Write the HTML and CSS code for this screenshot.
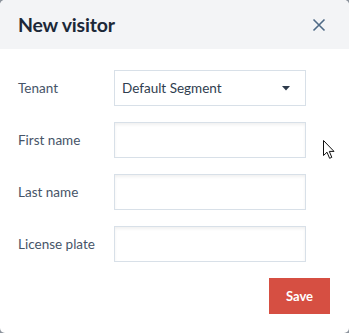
FILE: index.html
```html
<!DOCTYPE html>
<html>
<head>
<meta charset="utf-8">
<link rel="stylesheet" href="styles.css">
</head>
<body>
<div class="dialog">
  <div class="header">
    <h1 class="title">New visitor</h1>
    <button class="close" aria-label="Close">
      <svg width="14" height="14" viewBox="0 0 14 14"><path d="M1.5 1.5 L12.5 12.5 M12.5 1.5 L1.5 12.5" stroke="#4f6a86" stroke-width="1.6" fill="none"/></svg>
    </button>
  </div>
  <div class="body">
    <div class="row">
      <label class="label">Tenant</label>
      <div class="field select">
        <span>Default Segment</span>
        <svg class="caret" width="8" height="5" viewBox="0 0 8 5"><path d="M0 0 H8 L4 4.5 Z" fill="#2d3a4a"/></svg>
      </div>
    </div>
    <div class="row">
      <label class="label">First name</label>
      <div class="field input"></div>
    </div>
    <div class="row">
      <label class="label">Last name</label>
      <div class="field input"></div>
    </div>
    <div class="row">
      <label class="label">License plate</label>
      <div class="field input"></div>
    </div>
    <div class="actions">
      <button class="save">Save</button>
    </div>
  </div>
  <svg class="cursor" width="13" height="20" viewBox="0 0 13 20"><path d="M0.5 0.5 V15.5 L4 12.2 L6.6 18.3 L8.8 17.3 L6.3 11.4 H11 Z" fill="#fff" stroke="#111" stroke-width="1"/></svg>
</div>
</body>
</html>
```

FILE: styles.css
```css
html, body {
  margin: 0;
  padding: 0;
  background: #8c939c;
}
body {
  width: 349px;
  height: 333px;
  font-family: Lato, "Liberation Sans", sans-serif;
}
.dialog {
  position: relative;
  width: 349px;
  height: 333px;
  background: #fff;
  border-radius: 5px;
  overflow: hidden;
}
.header {
  height: 49px;
  background: #f3f4f6;
  display: flex;
  align-items: center;
  justify-content: space-between;
  padding: 0 18px;
}
.title {
  margin: 0;
  font-size: 19.5px;
  font-weight: 700;
  color: #1c2838;
  letter-spacing: -0.2px;
  margin-top: -1px;
}
.close {
  background: none;
  border: 0;
  padding: 0;
  width: 14px;
  height: 14px;
  margin-right: 5px;
  display: flex;
}
.body {
  padding: 21px 19px 0 18px;
  display: flex;
  flex-direction: column;
  gap: 16px;
}
.row {
  display: flex;
  align-items: center;
  height: 36px;
}
.label {
  width: 96px;
  font-size: 13.5px;
  color: #465468;
}
.field {
  box-sizing: border-box;
  width: 192px;
  height: 36px;
  border: 1px solid #d8e0e8;
  background: #fff;
}
.input {
  box-shadow: inset 0 2px 3px rgba(0,0,0,0.06);
}
.select {
  display: flex;
  align-items: center;
  justify-content: space-between;
  padding: 0 15px 0 7px;
  font-size: 13.5px;
  color: #2f3d4f;
}
.caret {
  display: block;
}
.actions {
  display: flex;
  justify-content: flex-end;
  margin-top: 0;
}
.save {
  width: 61px;
  height: 36px;
  border: 0;
  background: #d64f42;
  color: #fff;
  font-family: Lato, "Liberation Sans", sans-serif;
  font-weight: 700;
  font-size: 13px;
  margin-right: 0;
}
.cursor {
  position: absolute;
  left: 323px;
  top: 140px;
}
```
